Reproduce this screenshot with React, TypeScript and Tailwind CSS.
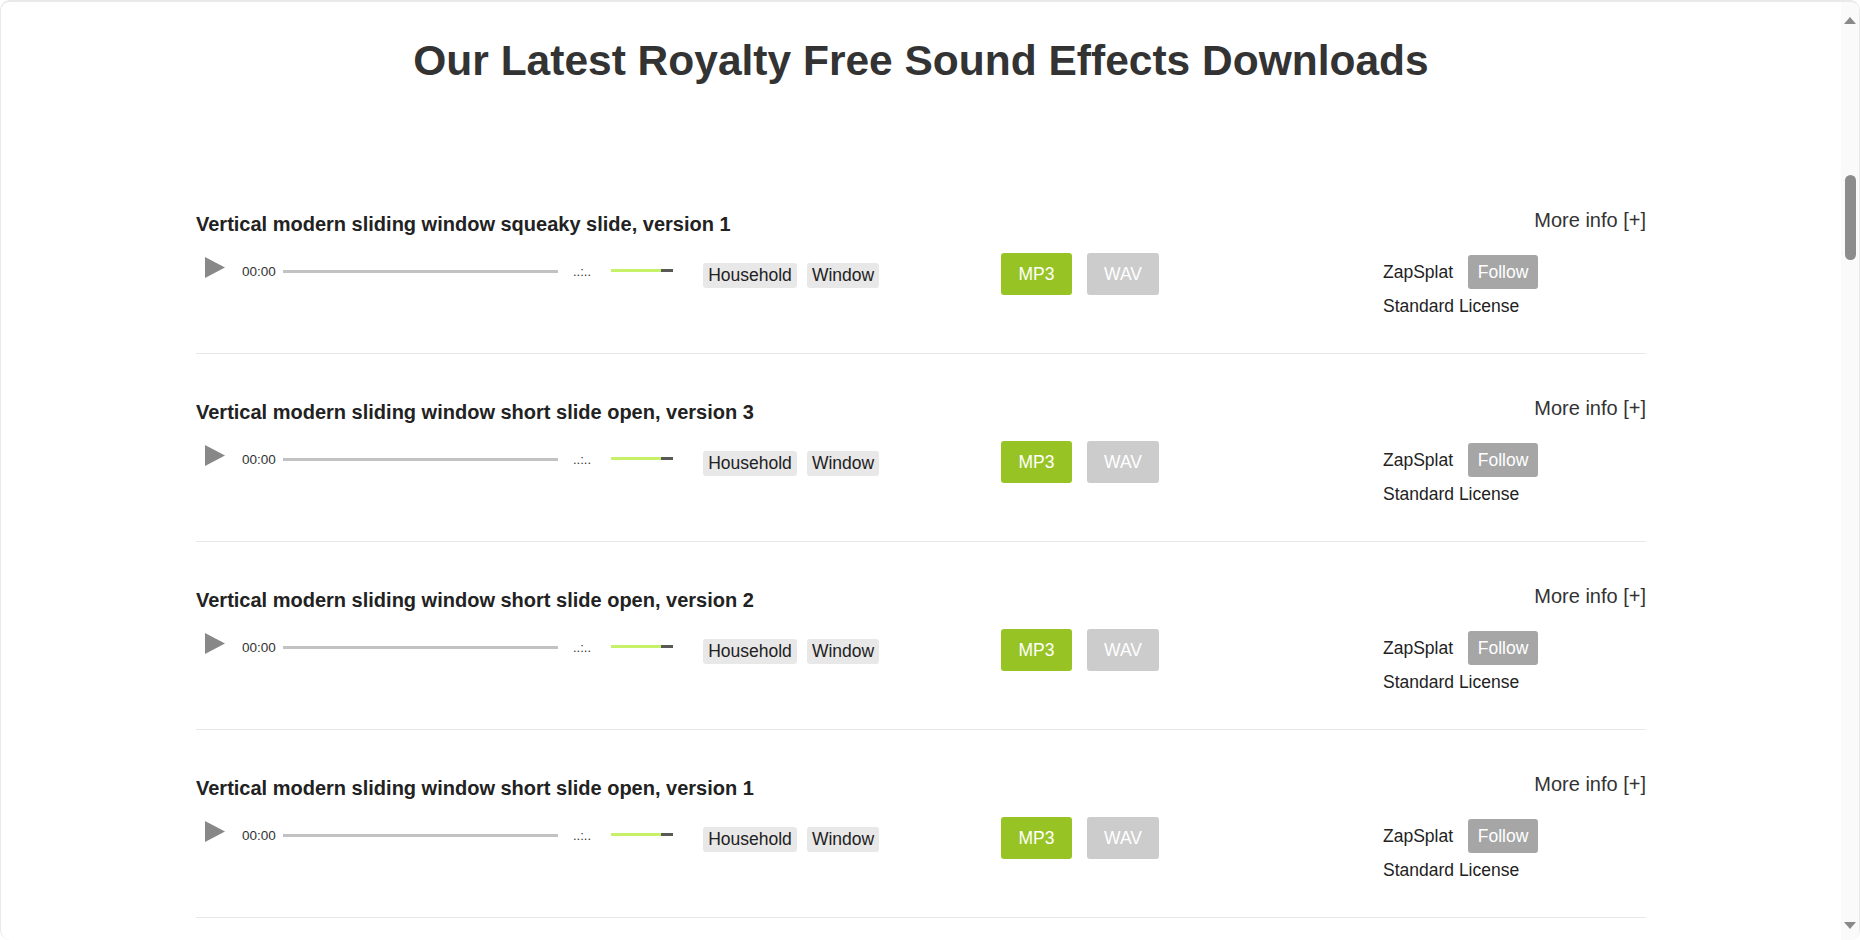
import React from 'react'

const SOUNDS = [
  'Vertical modern sliding window squeaky slide, version 1',
  'Vertical modern sliding window short slide open, version 3',
  'Vertical modern sliding window short slide open, version 2',
  'Vertical modern sliding window short slide open, version 1',
]

function PlayIcon() {
  return (
    <svg width="20" height="21" viewBox="0 0 20 21" className="block">
      <polygon points="0,0 20,10.5 0,21" fill="#888888" />
    </svg>
  )
}

function SoundRow({ title }: { title: string }) {
  return (
    <div className="h-[188px] border-b border-[#e8e8e8] pt-[43px]">
      {/* title + more info */}
      <div className="flex justify-between items-start h-[27px]">
        <h3 className="mt-[3px] text-[20px] leading-[24px] font-bold text-[#222222]">{title}</h3>
        <a className="-mt-[1px] text-[20px] leading-[24px] text-[#333333] cursor-pointer">More info [+]</a>
      </div>

      {/* player, tags, downloads, author */}
      <div className="flex items-start mt-[17px]">
        <button className="ml-[9px] mt-[4px]">
          <PlayIcon />
        </button>
        <span className="ml-[17px] mt-[11px] w-[34px] text-[13.5px] leading-[16px] text-[#333333]">00:00</span>
        <div className="ml-[7px] mt-[17px] w-[275px] h-[3px] bg-[#c2c2c2]" />
        <span className="ml-[15px] mt-[11px] w-[18px] text-[13px] leading-[16px] text-[#333333]">..:..</span>
        <div className="ml-[20px] mt-[16px] w-[62px] h-[3px] flex">
          <div className="w-[50px] h-full bg-[#c8f16a]" />
          <div className="flex-1 h-full bg-[#595959]" />
        </div>

        <span className="ml-[30px] mt-[10px] w-[94px] h-[25px] leading-[24px] text-center text-[17.5px] text-[#222222] bg-[#e8e8e8] rounded-[3px]">
          Household
        </span>
        <span className="ml-[10px] mt-[10px] w-[72px] h-[25px] leading-[24px] text-center text-[17.5px] text-[#222222] bg-[#e8e8e8] rounded-[3px]">
          Window
        </span>

        <button className="ml-[122px] w-[71px] h-[42px] rounded-[3px] bg-[#97c424] text-white text-[17.5px]">MP3</button>
        <button className="ml-[15px] w-[72px] h-[42px] rounded-[3px] bg-[#cccccc] text-white text-[17.5px]">WAV</button>

        <div className="ml-[224px] mt-[2px] flex flex-col">
          <div className="flex items-center">
            <span className="w-[85px] text-[17.5px] leading-[20px] text-[#222222]">ZapSplat</span>
            <button className="w-[70px] h-[34px] rounded-[3px] bg-[#a6a6a6] text-white text-[17.5px]">Follow</button>
          </div>
          <span className="mt-[7px] text-[17.5px] leading-[20px] text-[#222222]">Standard License</span>
        </div>
      </div>
    </div>
  )
}

function Scrollbar() {
  return (
    <div className="w-[18px] shrink-0 bg-[#fafafa] flex flex-col items-center">
      <svg width="12" height="7" viewBox="0 0 12 7" className="mt-[15px] block">
        <polygon points="6,0 12,7 0,7" fill="#8a8a8a" />
      </svg>
      <div className="mt-[151px] w-[11px] h-[85px] rounded-full bg-[#8c8c8c]" />
      <div className="flex-1" />
      <svg width="12" height="7" viewBox="0 0 12 7" className="mb-[11px] block">
        <polygon points="0,0 12,0 6,7" fill="#8a8a8a" />
      </svg>
    </div>
  )
}

export default function App() {
  return (
    <div className="h-[940px] w-[1860px] overflow-hidden bg-white font-['Liberation_Sans',Arial,sans-serif]">
      <div className="h-full flex border-t-2 border-x border-[#e9e9e9] rounded-[10px] overflow-hidden">
        <main className="flex-1 overflow-hidden">
          <h1 className="pt-[35px] text-center text-[42.5px] leading-[48px] font-bold text-[#333333]">
            Our Latest Royalty Free Sound Effects Downloads
          </h1>
          <div className="w-[1450px] mx-auto mt-[81px]">
            {SOUNDS.map(t => (
              <SoundRow key={t} title={t} />
            ))}
          </div>
        </main>
        <Scrollbar />
      </div>
    </div>
  )
}
